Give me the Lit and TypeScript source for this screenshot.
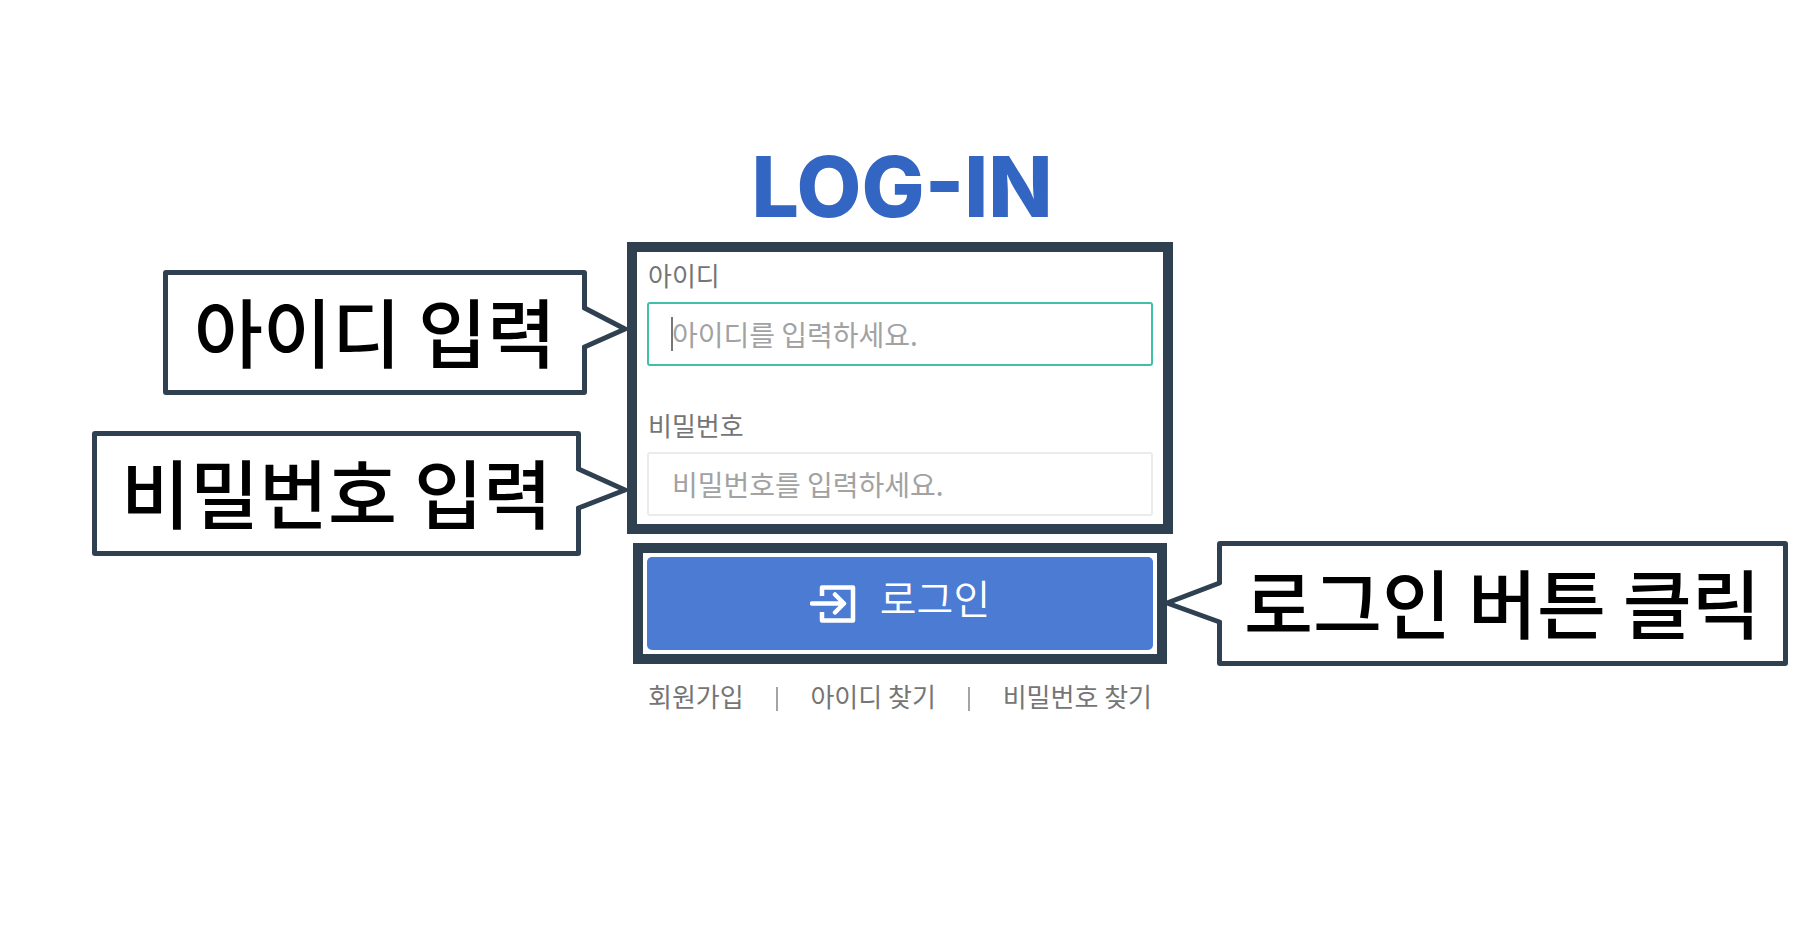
import { LitElement, html, css, svg } from "lit";
import { customElement, property } from "lit/decorators.js";

/** Boxed note whose pointed tail touches the part of the form it explains. */
@customElement("guide-callout")
export class GuideCallout extends LitElement {
  @property() side: "left" | "right" = "left";
  @property({ type: Number }) reach = 44;

  static styles = css`
    :host {
      display: flex;
      color: #000;
    }
    .box {
      box-sizing: border-box;
      height: 125px;
      padding: 0 var(--callout-padding, 24px);
      border: 5px solid #2f4050;
      border-radius: 3px;
      background: #fff;
      font-size: 75px;
      font-weight: 500;
      line-height: 110px;
      white-space: nowrap;
    }
    .tail {
      display: block;
      flex: none;
      height: 125px;
      z-index: 1;
    }
    .tail.left {
      margin-left: -5px;
    }
    .tail.right {
      order: -1;
      margin-right: -5px;
    }
    .fill {
      fill: #fff;
    }
    .line {
      fill: none;
      stroke: #2f4050;
      stroke-width: 5;
      stroke-linejoin: round;
      stroke-linecap: round;
    }
  `;

  render() {
    const w = this.reach;
    const shape =
      this.side === "left"
        ? svg`<path class="fill" d="M0 38H3L${w} 59L3 77H0Z"></path>
            <path class="line" d="M2.500 38L${w - 2} 59L2.500 77"></path>`
        : svg`<path class="fill" d="M${w} 42H${w - 3}L2 62L${w - 3} 81H${w}Z"></path>
            <path class="line" d="M${w - 2.5} 42L2 62L${w - 2.5} 81"></path>`;
    return html`
      <div class="box"><slot></slot></div>
      <svg class="tail ${this.side}" width=${w} height="125" viewBox="0 0 ${w} 125" aria-hidden="true">
        ${shape}
      </svg>
    `;
  }
}

@customElement("app-root")
export class AppRoot extends LitElement {
  static styles = css`
    :host {
      display: block;
      min-height: 100vh;
      box-sizing: border-box;
      padding-top: 143px;
      background: #fff;
      color: #757575;
      font-family: "Noto Sans CJK KR", "Noto Sans", sans-serif;
    }
    .page {
      display: grid;
      grid-template-columns: 1fr 546px 1fr;
    }
    h1 {
      grid-area: 1 / 2;
      margin: 0 0 11px;
      padding-left: 4px;
      color: #3366c2;
      font-family: Inter, sans-serif;
      font-size: 84px;
      font-weight: 800;
      line-height: 88px;
      text-align: center;
      white-space: nowrap;
    }
    .notes {
      grid-area: 2 / 1 / span 2;
      display: flex;
      flex-direction: column;
      align-items: flex-end;
      gap: 36px;
      padding-top: 28px;
    }
    .wide {
      --callout-padding: 26px;
    }
    .narrow {
      --callout-padding: 22px;
    }
    .frame {
      box-sizing: border-box;
      border: 10px solid #2f4050;
    }
    .fields {
      grid-area: 2 / 2;
      align-self: start;
      display: flex;
      flex-direction: column;
      gap: 41px;
      padding: 5px 10px 8px;
    }
    .field {
      display: flex;
      flex-direction: column;
      gap: 10px;
    }
    label {
      padding-left: 1px;
      font-size: 26px;
      line-height: 35px;
    }
    input {
      box-sizing: border-box;
      width: 100%;
      height: 64px;
      padding: 0 23px;
      border: 2px solid #ebebeb;
      border-radius: 3px;
      outline: none;
      background: #fff;
      color: #555;
      font-family: inherit;
      font-size: 28px;
    }
    input::placeholder {
      color: #a2a2a2;
      opacity: 1;
    }
    .active {
      border-color: #40c0a6;
      background: linear-gradient(#777, #777) no-repeat 22px center / 2px 34px #fff;
    }
    .submit {
      grid-area: 3 / 2;
      align-self: center;
      margin: 7px 6px 0;
      padding: 4px;
    }
    .hint {
      grid-area: 3 / 3;
      justify-self: start;
      margin: 7px 0 0 -8px;
    }
    button {
      display: flex;
      align-items: center;
      justify-content: center;
      gap: 24px;
      width: 100%;
      height: 93px;
      padding: 0;
      border: 0;
      border-radius: 5px;
      background: #4b7bd3;
      color: #fff;
      font-family: inherit;
      font-size: 40px;
      font-weight: 350;
      line-height: 60px;
    }
    .caption {
      padding-bottom: 14px;
    }
    .enter {
      width: 46px;
      height: 38px;
    }
    nav {
      grid-area: 4 / 2;
      display: flex;
      justify-content: space-between;
      margin-top: 12px;
      padding: 0 21px;
      font-size: 26px;
      line-height: 36px;
    }
    a {
      color: inherit;
      text-decoration: none;
    }
    .bar {
      align-self: end;
      width: 2px;
      height: 24px;
      margin-bottom: 3px;
      background: #a4a4a4;
    }
  `;

  render() {
    return html`
      <main class="page">
        <h1>LOG-IN</h1>
        <div class="notes">
          <guide-callout class="wide" side="left" .reach=${45}>아이디 입력</guide-callout>
          <guide-callout side="left" .reach=${51}>비밀번호 입력</guide-callout>
        </div>
        <div class="frame fields">
          <div class="field">
            <label for="user">아이디</label>
            <input id="user" class="active" type="text" placeholder="아이디를 입력하세요." />
          </div>
          <div class="field">
            <label for="pass">비밀번호</label>
            <input id="pass" type="password" placeholder="비밀번호를 입력하세요." />
          </div>
        </div>
        <div class="frame submit">
          <button type="button">
            <svg class="enter" viewBox="0 0 46 38" fill="none" stroke="#fff" aria-hidden="true">
              <path d="M12 11V2.500H43V35.500H12V27" stroke-width="4.500" stroke-linejoin="round" />
              <path d="M2 18.500H33M25 9.500L34 18.500L25 27.500" stroke-width="4.500" stroke-linecap="round" stroke-linejoin="round" />
            </svg>
            <span class="caption">로그인</span>
          </button>
        </div>
        <guide-callout class="hint narrow" side="right" .reach=${57}>로그인 버튼 클릭</guide-callout>
        <nav>
          <a href="#join">회원가입</a>
          <span class="bar"></span>
          <a href="#find-id">아이디 찾기</a>
          <span class="bar"></span>
          <a href="#find-password">비밀번호 찾기</a>
        </nav>
      </main>
    `;
  }
}
